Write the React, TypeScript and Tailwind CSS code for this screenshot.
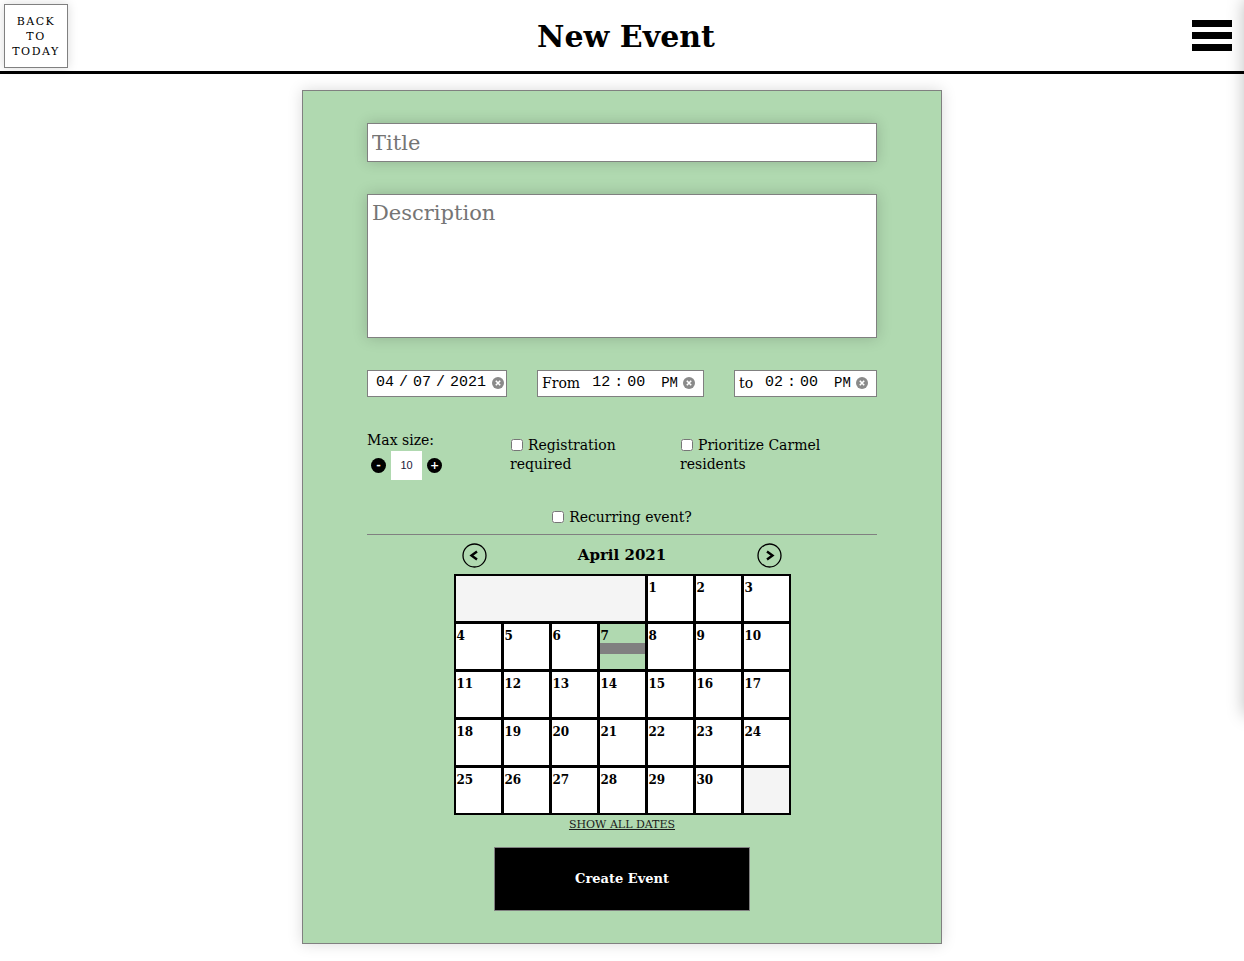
import { useState } from "react";

const serif = "font-['DejaVu_Serif','Liberation_Serif',serif]";
const mono = "font-['Liberation_Mono','DejaVu_Sans_Mono',monospace]";

function ClearIcon() {
  return (
    <svg width="12" height="12" viewBox="0 0 12 12" className="shrink-0">
      <circle cx="6" cy="6" r="6" fill="#8a8a8a" />
      <path d="M3.8 3.8 L8.2 8.2 M8.2 3.8 L3.8 8.2" stroke="#fff" strokeWidth="1.6" />
    </svg>
  );
}

function Arrow({ dir }: { dir: "l" | "r" }) {
  return (
    <svg width="25" height="25" viewBox="0 0 25 25">
      <circle cx="12.5" cy="12.5" r="11.5" fill="none" stroke="#000" strokeWidth="1.3" />
      {dir === "l" ? (
        <path d="M15 8.5 L9.5 12.5 L15 16.5" fill="none" stroke="#000" strokeWidth="2.4" />
      ) : (
        <path d="M10 8.5 L15.5 12.5 L10 16.5" fill="none" stroke="#000" strokeWidth="2.4" />
      )}
    </svg>
  );
}

function Time({ h, m }: { h: string; m: string }) {
  return (
    <span className={`ml-[12px] flex gap-[4px] text-[15px] ${mono}`}>
      <span>{h}</span>
      <span>:</span>
      <span>{m}</span>
    </span>
  );
}

function Calendar() {
  const days = Array.from({ length: 30 }, (_, i) => i + 1);
  return (
    <div className="flex flex-col items-center">
      <div className="mt-[8px] flex w-[320px] items-center justify-between">
        <Arrow dir="l" />
        <span className="text-[15px] font-bold text-black">April 2021</span>
        <Arrow dir="r" />
      </div>
      <div className="mt-[6px] grid auto-rows-[45px] grid-cols-[repeat(7,45px)] gap-[3px] border-2 border-black bg-black">
        <div className="col-span-4 bg-[#f4f4f4]" />
        {days.map((d) => (
          <div key={d} className={d === 7 ? "relative bg-[#b0d9b0]" : "bg-white"}>
            <span className="block pl-[1px] pt-[5px] text-[12px] font-bold leading-[14px] text-black">
              {d}
            </span>
            {d === 7 && <div className="absolute left-0 right-0 top-[19px] h-[11px] bg-[#808080]" />}
          </div>
        ))}
        <div className="bg-[#f4f4f4]" />
      </div>
    </div>
  );
}

export default function App() {
  const [size, setSize] = useState(10);
  return (
    <div className={`relative min-h-[961px] overflow-hidden bg-white ${serif}`}>
      <div className="absolute left-full top-0 h-[715px] w-[200px] shadow-[0_0_16px_rgba(0,0,0,0.25)]" />
      <header className="relative flex h-[74px] items-center justify-center border-b-[3px] border-black">
        <button className="absolute left-[4px] top-[4px] flex h-[64px] w-[64px] flex-col items-center justify-center border border-[#808080] bg-white text-[11px] leading-[15px] tracking-[1.5px] text-black shadow-[0_0_10px_rgba(0,0,0,0.15)]">
          <span>BACK</span>
          <span>TO</span>
          <span>TODAY</span>
        </button>
        <h1 className="ml-[8px] mt-[1px] text-[30px] font-bold text-black">New Event</h1>
        <div className="absolute right-[12px] top-[20px] flex flex-col gap-[5px]">
          <div className="h-[7px] w-[40px] bg-black" />
          <div className="h-[7px] w-[40px] bg-black" />
          <div className="h-[7px] w-[40px] bg-black" />
        </div>
      </header>

      <main className="mx-auto mt-[16px] w-[640px] border border-[#808080] bg-[#b0d9b0] px-[64px] pt-[32px] pb-[32px] shadow-[0_0_14px_rgba(0,0,0,0.15)]">
        <input
          placeholder="Title"
          className="block h-[39px] w-[510px] border border-[#808080] bg-white px-[4px] text-[21px] text-black shadow-[0_0_14px_rgba(0,0,0,0.18)] outline-none placeholder:text-[#757575]"
        />
        <textarea
          placeholder="Description"
          className="mt-[32px] block h-[144px] w-[510px] resize-none border border-[#808080] bg-white px-[4px] pt-[3px] text-[21px] text-black shadow-[0_0_14px_rgba(0,0,0,0.18)] outline-none placeholder:text-[#757575]"
        />

        <div className="mt-[32px] flex items-center justify-between text-black">
          <div className={`flex h-[27px] w-[140px] items-center border border-[#808080] bg-white pl-[8px] text-[15px] ${mono}`}>
            <span className="flex gap-[5px]">
              <span>04</span>
              <span>/</span>
              <span>07</span>
              <span>/</span>
              <span>2021</span>
            </span>
            <span className="ml-[6px] -mt-[2px]">
              <ClearIcon />
            </span>
          </div>
          <div className="flex h-[27px] w-[167px] items-center border border-[#808080] bg-white pl-[4px]">
            <span className="text-[14px]">From</span>
            <Time h="12" m="00" />
            <span className={`ml-[16px] mr-[5px] text-[14px] ${mono}`}>PM</span>
            <span className="-mt-[2px]">
              <ClearIcon />
            </span>
          </div>
          <div className="flex h-[27px] w-[143px] items-center border border-[#808080] bg-white pl-[4px]">
            <span className="text-[14px]">to</span>
            <Time h="02" m="00" />
            <span className={`ml-[16px] mr-[5px] text-[14px] ${mono}`}>PM</span>
            <span className="-mt-[2px]">
              <ClearIcon />
            </span>
          </div>
        </div>

        <div className="mt-[34px] flex text-[14px] leading-[19px] text-black">
          <div className="w-[143px]">
            <div>Max size:</div>
            <div className="mt-[1px] flex items-center pl-[4px]">
              <button
                onClick={() => setSize(size - 1)}
                className="flex h-[15px] w-[15px] items-center justify-center rounded-full bg-black text-[11px] font-bold leading-none text-white"
              >
                -
              </button>
              <div className="mx-[5px] flex h-[29px] w-[31px] items-center justify-center bg-white font-['Liberation_Sans',sans-serif] text-[11px] text-[#1a1a3a]">
                {size}
              </div>
              <button
                onClick={() => setSize(size + 1)}
                className="flex h-[15px] w-[15px] items-center justify-center rounded-full bg-black text-[11px] font-bold leading-none text-white"
              >
                +
              </button>
            </div>
          </div>
          <label className="mt-[5px] block w-[170px]">
            <input type="checkbox" className="ml-[1px] mr-[5px] h-[12px] w-[12px] align-[-1px]" />
            Registration required
          </label>
          <label className="mt-[5px] block w-[170px]">
            <input type="checkbox" className="ml-[1px] mr-[5px] h-[12px] w-[12px] align-[-1px]" />
            Prioritize Carmel residents
          </label>
        </div>

        <div className="mt-[28px] text-center text-[14px] leading-[19px] text-black">
          <label>
            <input type="checkbox" className="mr-[5px] h-[12px] w-[12px] align-[-1px]" />
            Recurring event?
          </label>
        </div>
        <div className="mt-[7px] h-px w-[510px] bg-[#808080]" />

        <Calendar />

        <div className="text-center leading-[16px]">
          <a className="text-[11px] text-[#1a1a1a] underline">SHOW ALL DATES</a>
        </div>

        <div className="mt-[14px] flex justify-center">
          <button className="h-[64px] w-[256px] border border-[#808080] bg-black text-[13px] font-bold text-white">
            Create Event
          </button>
        </div>
      </main>
    </div>
  );
}
